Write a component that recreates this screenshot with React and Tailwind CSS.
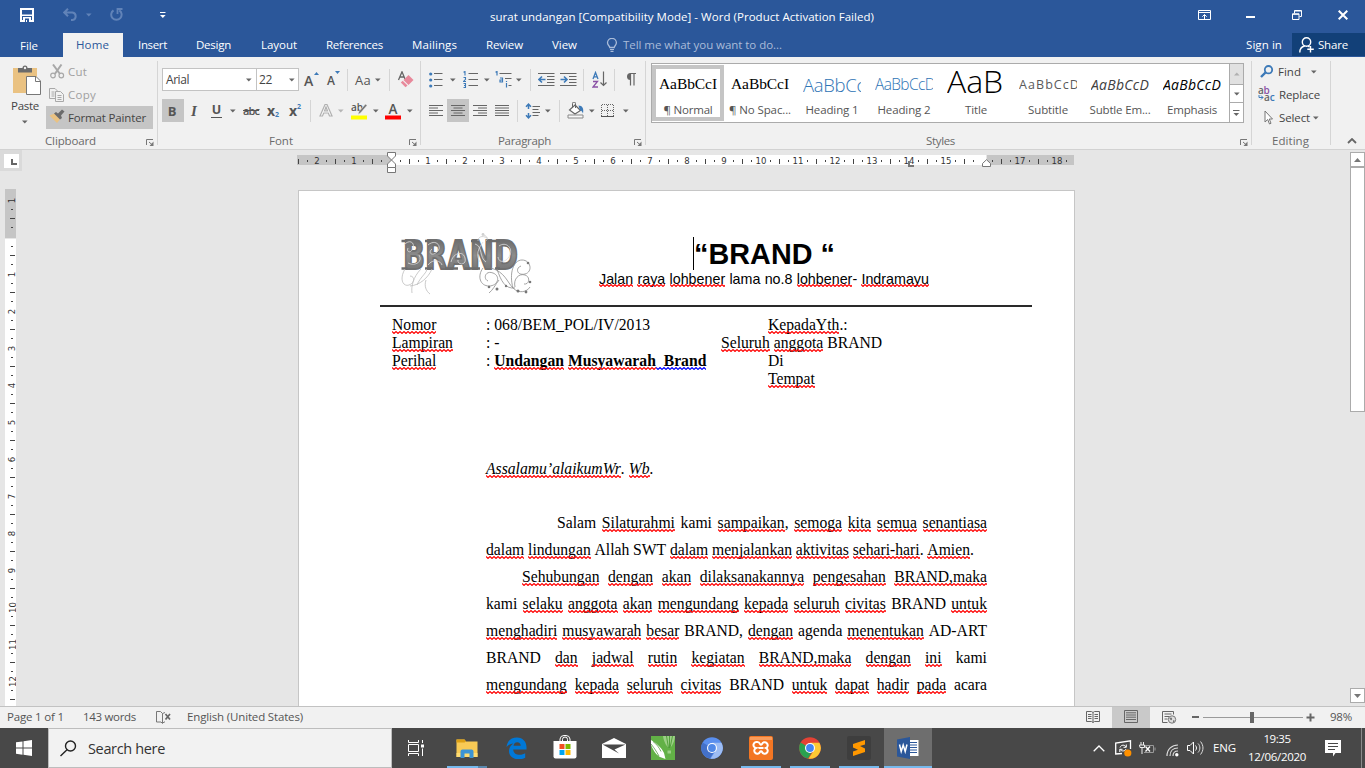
import React, { useLayoutEffect, useRef } from "react";

/* Text set to a fixed measure: the tracking is computed from the natural width. */
function Fit({ w, className = "", children }) {
  const ref = useRef(null);
  useLayoutEffect(() => {
    const el = ref.current;
    el.style.letterSpacing = "0px";
    const natural = el.getBoundingClientRect().width;
    const n = el.textContent.length;
    el.style.letterSpacing = (w - natural) / n + "px";
  }, [w, children]);
  return (
    <span ref={ref} className={"inline-block shrink-0 whitespace-pre " + className}>
      {children}
    </span>
  );
}

function Ico({ w, h, className = "", children }) {
  return (
    <svg width={w} height={h} viewBox={`0 0 ${w} ${h}`} fill="none" className={"block shrink-0 " + className}>
      {children}
    </svg>
  );
}

const Arrow = ({ className = "", color = "#666" }) => (
  <Ico w={6} h={4} className={className}>
    <path d="M0 0.5h5.6L2.8 3.5z" fill={color} />
  </Ico>
);
const Sep = ({ className = "" }) => <div className={"h-[22px] w-px shrink-0 bg-[#d5d5d5] " + className} />;
const GroupSep = () => <div className="mt-1 h-[84px] w-px shrink-0 bg-[#d5d5d5]" />;
const Launcher = ({ className = "" }) => (
  <Ico w={8} h={7} className={className}>
    <path d="M0.5 6V0.5H7" stroke="#777" />
    <path d="M3 3l3 2.6" stroke="#777" />
    <path d="M7.5 2.5V7H3.5z" fill="#777" />
  </Ico>
);

function TitleBar() {
  return (
    <div className="flex h-[33px] items-center text-white">
      <Ico w={14} h={14} className="ml-5 -mt-[3px]">
        <path d="M1 1h12v12H1z" stroke="#fff" strokeWidth="2" />
        <path d="M2 6.500h10v1.600H2zM3 9h8v5H3z" fill="#fff" />
        <path d="M5 10.500h4V14H7v-2H6v2H5z" fill="#2b579a" />
      </Ico>
      <Ico w={14} h={13} className="ml-[29px] -mt-1">
        <path d="M1 4.500h8.500a3.800 3.800 0 0 1 0 7.500H8M5 0.700L1.200 4.500L5 8.300" stroke="#6183b8" strokeWidth="2" />
      </Ico>
      <Arrow className="ml-[9px] -mt-1" color="#6183b8" />
      <Ico w={13} h={13} className="ml-[18px] -mt-1">
        <path d="M3.500 2.300a5.200 5.200 0 1 0 5.800 0" stroke="#6183b8" strokeWidth="2" />
        <path d="M7.500 6V1h5" stroke="#6183b8" strokeWidth="1.800" />
      </Ico>
      <Ico w={6} h={7} className="ml-[37px] -mt-[3px]">
        <path d="M0 0.500h5.500" stroke="#fff" />
        <path d="M0 3h5.600L2.800 6z" fill="#fff" />
      </Ico>
      <Fit w={384} className="ml-[324px] text-[11.5px]">surat undangan [Compatibility Mode] - Word (Product Activation Failed)</Fit>
      <Ico w={13} h={10} className="ml-[324px] -mt-[3px]">
        <path d="M0.500 0.500h12v9h-12zM0.500 2.500h12M6.500 9V4.500M4.300 6.700L6.500 4.500l2.200 2.200" stroke="#fff" />
      </Ico>
      <div className="ml-[35px] h-0.5 w-[9px] bg-white" />
      <Ico w={10} h={10} className="ml-[37px] -mt-[3px]">
        <path d="M0.500 3.800h6.500v5.700H0.500zM0.500 4.300H7" stroke="#fff" />
        <path d="M2.500 3.500v-3h7v6H7.500M2.500 1h7" stroke="#fff" />
      </Ico>
      <Ico w={10} h={10} className="ml-9 -mt-[3px]">
        <path d="M0.700 0.700l8.600 8.600M9.300 0.700L0.700 9.300" stroke="#fff" strokeWidth="2" />
      </Ico>
    </div>
  );
}

function Tabs() {
  return (
    <div className="flex h-6 items-center text-[11.5px] text-white">
      <Fit w={18} className="ml-5 mt-px">File</Fit>
      <div className="ml-[25px] flex h-6 w-[60px] items-center bg-[#f1f1f1] pl-[13px] text-[#2b579a]">
        <Fit w={33}>Home</Fit>
      </div>
      <Fit w={29} className="ml-[15px]">Insert</Fit>
      <Fit w={35} className="ml-[29px]">Design</Fit>
      <Fit w={36} className="ml-[30px]">Layout</Fit>
      <Fit w={57} className="ml-[29px]">References</Fit>
      <Fit w={45} className="ml-[29px]">Mailings</Fit>
      <Fit w={37} className="ml-[29px]">Review</Fit>
      <Fit w={25} className="ml-[29px]">View</Fit>
      <Ico w={12} h={14} className="ml-[29px]">
        <path d="M3.800 9.500C3.800 8 1.500 7.200 1.500 4.800a4.400 4.400 0 0 1 8.900 0C10.400 7.200 8.200 8 8.200 9.500z" stroke="#aabcd9" strokeWidth="1.300" />
        <path d="M4 11.500h4M4.500 13.300h3" stroke="#aabcd9" strokeWidth="1.200" />
      </Ico>
      <Fit w={159} className="ml-[5px] text-[#aabcd9]">Tell me what you want to do...</Fit>
      <Fit w={36} className="ml-[464px]">Sign in</Fit>
      <div className="mb-px ml-[10px] flex h-[23px] w-[73px] items-center bg-[#124078] pl-[7px]">
        <Ico w={15} h={16}>
          <circle cx="7.500" cy="5" r="4.200" stroke="#fff" strokeWidth="1.400" />
          <path d="M0.800 15.500c0-4 2.500-6 5-6.500M9 9.200l1.500.8M11.500 9v6.500M8.300 12.300h6.500" stroke="#fff" strokeWidth="1.400" />
        </Ico>
        <Fit w={30} className="ml-1">Share</Fit>
      </div>
    </div>
  );
}

function Clipboard() {
  return (
    <div className="flex w-[157px] flex-col">
      <div className="flex h-[76px]">
        <div className="flex w-[46px] flex-col items-start pt-2">
          <Ico w={30} h={31} className="ml-[13px]">
            <path d="M0 3h24v25H0z" fill="#eac282" />
            <path d="M5 3h4.500a2.500 2.500 0 0 1 5 0H19v4.500H5z" fill="#6b6b6b" />
            <circle cx="12" cy="3" r="1.200" fill="#f1f1f1" />
            <path d="M13.500 11.500h9.500l4.500 4.500v13.500h-14z" fill="#fff" stroke="#777" />
            <path d="M22.500 11.500v5h5" stroke="#777" />
          </Ico>
          <Fit w={28} className="ml-[11px] mt-0.5 h-4 text-[11.5px] leading-4 text-[#444]">Paste</Fit>
          <Arrow className="ml-[22px] mt-[6px]" />
        </div>
        <div className="flex w-[107px] flex-col pt-[3px] text-[11.5px]">
          <div className="flex h-[23px] items-center text-[#a0a0a0]">
            <Ico w={15} h={15} className="ml-[4px]">
              <path d="M3 0.500l7 9.500M11.500 0.500L4.800 10" stroke="#a8a8a8" strokeWidth="2" />
              <circle cx="3" cy="11.500" r="2.300" stroke="#a8a8a8" strokeWidth="1.200" />
              <circle cx="11.300" cy="11.500" r="2.300" stroke="#a8a8a8" strokeWidth="1.200" />
            </Ico>
            <Fit w={19} className="ml-[3px]">Cut</Fit>
          </div>
          <div className="flex h-[23px] items-center text-[#a0a0a0]">
            <Ico w={16} h={14} className="ml-[3px]">
              <path d="M6 10.500H0.500v-10H6l2.500 2.500M2.500 4h3M2.500 6h3M2.500 8h3" stroke="#a8a8a8" />
              <path d="M6.500 3.500h5l3 3v7h-8zM8.500 7.500h4M8.500 9.500h4M8.500 11.500h4" stroke="#a8a8a8" />
            </Ico>
            <Fit w={28} className="ml-[3px]">Copy</Fit>
          </div>
          <div className="flex h-[23px] items-center bg-[#c5c5c5] text-[#444]">
            <Ico w={16} h={15} className="ml-[3px] -mt-0.5">
              <path d="M0.500 6.500l5-2 5.500 6L8 14z" fill="#eac282" />
              <path d="M5 4.500L7 3l2 1.500L13 0.500l2.500 2L12 6.500l1 2.500-2 1.500z" fill="#6b6b6b" />
            </Ico>
            <Fit w={78} className="ml-[3px]">Format Painter</Fit>
          </div>
        </div>
      </div>
      <div className="flex h-4 items-center text-[11.5px] text-[#6a6a6a]">
        <Fit w={51} className="ml-[45px]">Clipboard</Fit>
        <Launcher className="ml-[50px] mt-0.5" />
      </div>
    </div>
  );
}

function FontGroup() {
  return (
    <div className="flex w-[262px] flex-col pt-[11px] text-[#444]">
      <div className="flex h-[23px] items-center">
        <div className="ml-1 flex h-[23px] w-[95px] shrink-0 items-center border border-[#c3c3c3] bg-white">
          <Fit w={23} className="ml-[3px] text-[12px]">Arial</Fit>
          <Arrow className="ml-[57px]" />
        </div>
        <div className="-ml-px flex h-[23px] w-[43px] shrink-0 items-center border border-[#c3c3c3] bg-white">
          <Fit w={13} className="ml-[2px] text-[12px]">22</Fit>
          <Arrow className="ml-[17px]" />
        </div>
        <div className="ml-[5px] flex w-4 items-start">
          <span className="w-[10px] pt-[2px] text-[14px] font-semibold leading-4 text-[#555]">A</span>
          <Ico w={5} h={3} className="mt-[1px]"><path d="M0 3h5L2.500 0z" fill="#3d7ab8" /></Ico>
        </div>
        <div className="ml-[7px] flex w-[14px] items-start">
          <span className="w-[8px] pt-[3px] text-[12px] font-semibold leading-4 text-[#555]">A</span>
          <Ico w={5} h={3} className="mt-[1px]"><path d="M0 0h5L2.500 3z" fill="#3d7ab8" /></Ico>
        </div>
        <Sep className="ml-[6px]" />
        <Fit w={16} className="ml-[7px] text-[13px] font-medium leading-5 text-[#555]">Aa</Fit>
        <Arrow className="ml-1" />
        <Sep className="ml-2" />
        <Ico w={17} h={17} className="ml-[7px]">
          <path d="M1.500 9L5 0.800L8 8M2.800 6h4" stroke="#666" strokeWidth="1.300" />
          <path d="M11.500 4l5 5-5 5L6.500 9z" fill="#e8899b" />
          <path d="M5.700 9.800l4.800 4.800-2 1.600L3.800 11.500z" fill="#e8899b" />
        </Ico>
      </div>
      <div className="mt-2 flex h-[23px] items-center text-[#555]">
        <div className="ml-1 flex h-[23px] w-[22px] shrink-0 items-center justify-center bg-[#c5c5c5] pr-0.5 text-[13px] font-bold">B</div>
        <span className="ml-[5px] w-[10px] shrink-0 text-center font-['Liberation_Serif'] text-[15px] font-bold italic">I</span>
        <span className="ml-3 flex h-[15px] w-[11px] shrink-0 items-center justify-center border-b border-[#555] text-[12.5px] font-bold">U</span>
        <Arrow className="ml-2" />
        <Fit w={16} className="ml-[7px] text-[11px] font-semibold line-through">abc</Fit>
        <div className="ml-2 flex w-[13px] shrink-0 items-end">
          <span className="text-[14px] font-bold leading-4 text-[#555]">x</span>
          <span className="text-[7px] font-bold leading-[8px] text-[#3d7ab8]">2</span>
        </div>
        <div className="ml-[9px] flex w-[13px] shrink-0 items-start">
          <span className="text-[14px] font-bold leading-4 text-[#555]">x</span>
          <span className="text-[7px] font-bold leading-[8px] text-[#3d7ab8]">2</span>
        </div>
        <Sep className="ml-2" />
        <Ico w={14} h={15} className="ml-2">
          <path d="M1 13L6 1.500h2L13 13h-2.500l-1.200-3H4.700l-1.200 3zM5.500 8h3L7 4z" stroke="#b0b0b0" strokeWidth="1.200" fill="#fafafa" />
        </Ico>
        <Arrow className="ml-[5px]" color="#b5b5b5" />
        <Ico w={18} h={18} className="ml-[6px]">
          <text x="1" y="8.500" fontSize="10" fontWeight="600" fill="#555" fontFamily="Open Sans">ab</text>
          <path d="M15.500 2L17 3.500L10.500 11L8 12.500L9 9.500z" fill="#777" stroke="#f1f1f1" strokeWidth="0.500" />
          <path d="M1 13.500h16V17.500H1z" fill="#ff0" />
        </Ico>
        <Arrow className="ml-[5px]" />
        <Ico w={16} h={18} className="ml-[6px]">
          <text x="3.500" y="12" fontSize="13.500" fontWeight="600" fill="#555" fontFamily="Open Sans">A</text>
          <path d="M0 13.500h16V17.500H0z" fill="#f00" />
        </Ico>
        <Arrow className="ml-[6px]" />
      </div>
      <div className="mt-[11px] flex h-4 items-center text-[11.5px] text-[#6a6a6a]">
        <Fit w={24} className="ml-[111px]">Font</Fit>
        <Launcher className="ml-[116px] mt-0.5" />
      </div>
    </div>
  );
}

const AlignIcon = ({ rows, className = "" }) => (
  <Ico w={14} h={11} className={className}>
    {rows.map(([a, b], i) => (
      <path key={i} d={`M${a} ${[0.5, 3, 5.5, 8, 10.5][i]}H${b}`} stroke="#666" />
    ))}
  </Ico>
);

function ParagraphGroup() {
  return (
    <div className="flex w-[224px] flex-col pt-[11px]">
      <div className="flex h-[23px] items-center">
        <Ico w={14} h={16} className="ml-2">
          <circle cx="1.700" cy="2" r="1.600" fill="#3d7ab8" />
          <circle cx="1.700" cy="8" r="1.600" fill="#3d7ab8" />
          <circle cx="1.700" cy="14" r="1.600" fill="#3d7ab8" />
          <path d="M5 1.500h8.500M5 7.500h8.500M5 13.500h8.500" stroke="#666" />
        </Ico>
        <Arrow className="ml-[7px]" />
        <Ico w={15} h={17} className="ml-[7px]">
          <path d="M0.500 1.200L2 0.500v4M0.500 6.500h2v1.800L0.500 10.500h2.500M0.500 12.500h2v4h-2M1 14.500h1.500" stroke="#3d7ab8" strokeWidth="1.100" />
          <path d="M5.500 2.500H15M5.500 8.500H15M5.500 14.500H15" stroke="#666" />
        </Ico>
        <Arrow className="ml-[6px]" />
        <Ico w={18} h={17} className="ml-[5px]">
          <path d="M0.500 1.200L2 0.500v4M5 7h2.500v4H5V9h2.500M11.500 12v4.500M11.500 10v1" stroke="#3d7ab8" strokeWidth="1.200" />
          <path d="M4.500 2.500h12M10 7.500h6.500M13.500 14.500h3" stroke="#666" />
        </Ico>
        <Arrow className="ml-[3px]" />
        <Sep className="ml-2" />
        <Ico w={17} h={14} className="ml-[7px]">
          <path d="M0 0.500h16.500M9 3.500h7.500M9 6.500h7.500M9 9.500h7.500M0 12.500h16.500" stroke="#666" />
          <path d="M1.500 6.500H7.500M4 3.500L1 6.500L4 9.500" stroke="#3d7ab8" strokeWidth="1.600" />
        </Ico>
        <Ico w={17} h={14} className="ml-[5px]">
          <path d="M0 0.500h16.500M9 3.500h7.500M9 6.500h7.500M9 9.500h7.500M0 12.500h16.500" stroke="#666" />
          <path d="M0.500 6.500H6.500M4 3.500L7 6.500L4 9.500" stroke="#3d7ab8" strokeWidth="1.600" />
        </Ico>
        <Sep className="ml-[6px]" />
        <Ico w={15} h={17} className="ml-2">
          <path d="M1 8L3.500 1.500L6 8M1.700 5.800h3.600" stroke="#3d7ab8" strokeWidth="1.300" />
          <path d="M1 10.500h4.500L1 16h5" stroke="#8a51a5" strokeWidth="1.300" />
          <path d="M11.500 0.500V14.500M8.500 11.500l3 3 3-3" stroke="#666" strokeWidth="1.200" />
        </Ico>
        <Sep className="ml-[7px]" />
        <Ico w={11} h={13} className="ml-[10px]">
          <path d="M5.500 0.500H11M5.500 0v12.500M9 0v12.500" stroke="#666" strokeWidth="1.200" />
          <path d="M5.500 0a3.500 3.500 0 0 0 0 7z" fill="#666" />
        </Ico>
      </div>
      <div className="mt-2 flex h-[23px] items-center">
        <AlignIcon className="ml-2" rows={[[0, 14], [0, 9], [0, 14], [0, 9], [0, 14]]} />
        <div className="ml-1 flex h-[23px] w-[22px] shrink-0 items-center justify-center bg-[#c5c5c5]">
          <AlignIcon rows={[[0, 14], [2.5, 11.5], [0, 14], [2.5, 11.5], [0, 14]]} />
        </div>
        <AlignIcon className="ml-1" rows={[[0, 14], [5, 14], [0, 14], [5, 14], [0, 14]]} />
        <AlignIcon className="ml-2" rows={[[0, 14], [0, 14], [0, 14], [0, 14], [0, 14]]} />
        <Sep className="ml-2" />
        <Ico w={16} h={16} className="ml-[7px]">
          <path d="M3.500 1v5M3.500 10v5M1 3.800L3.500 1.200L6 3.800M1 12.200L3.500 14.800L6 12.200" stroke="#3d7ab8" strokeWidth="1.500" />
          <path d="M7.500 3.500H15M7.500 6.500H13.500M7.500 9.500H15M7.500 12.500H13.500" stroke="#666" />
        </Ico>
        <Arrow className="ml-1" />
        <Sep className="ml-2" />
        <Ico w={17} h={17} className="ml-[7px]">
          <path d="M8 3L13.500 8.500L8 12L2.500 8z" fill="#fff" stroke="#666" strokeWidth="1.200" />
          <path d="M5.500 6V1.500a1.500 1.500 0 0 1 3 0V6" stroke="#666" />
          <path d="M11.500 3.500c4 0 5.500 3 4.500 8c-1-2.500-2-3-3-3z" fill="#3d7ab8" />
          <path d="M1 13h15v3H1z" fill="#f8f8f8" stroke="#888" />
        </Ico>
        <Arrow className="ml-[5px]" />
        <Ico w={14} h={14} className="ml-[6px]">
          <path d="M1 0.500h12M0.500 1v12M12.500 1v12M6.500 1v12M1 6.500h12" stroke="#666" strokeDasharray="1 1" />
          <path d="M0 12.500h13" stroke="#555" />
        </Ico>
        <Arrow className="ml-2" />
      </div>
      <div className="mt-[11px] flex h-4 items-center text-[11.5px] text-[#6a6a6a]">
        <Fit w={53} className="ml-[77px]">Paragraph</Fit>
        <Launcher className="ml-[83px] mt-0.5" />
      </div>
    </div>
  );
}

function StyleCell({ label, lw, selected, children }) {
  return (
    <div className={"flex h-[56px] w-[72px] shrink-0 flex-col items-center " + (selected ? "border-4 border-[#c5c5c5]" : "pt-1")}>
      <div className="flex h-[29px] w-[58px] shrink-0 items-center overflow-hidden">{children}</div>
      <div className="mt-1 flex h-4 items-center text-[11.5px] text-[#555]">
        <Fit w={lw}>{label}</Fit>
      </div>
    </div>
  );
}

function StylesGroup() {
  return (
    <div className="flex w-[605px] flex-col pt-1.5">
      <div className="ml-[5px] flex h-[60px] w-[593px] border border-[#ababab] bg-white">
        <div className="flex w-[577px] overflow-hidden pt-px">
          <StyleCell label="¶ Normal" lw={49} selected>
            <Fit w={58} className="mt-px font-['Liberation_Serif'] text-[15.5px] text-black">AaBbCcI</Fit>
          </StyleCell>
          <StyleCell label="¶ No Spac..." lw={62}>
            <Fit w={58} className="mt-px font-['Liberation_Serif'] text-[15.5px] text-black">AaBbCcI</Fit>
          </StyleCell>
          <StyleCell label="Heading 1" lw={53}>
            <Fit w={62} className="mt-[3px] text-[18.5px] font-light text-[#2e74b5]">AaBbCc</Fit>
          </StyleCell>
          <StyleCell label="Heading 2" lw={53}>
            <Fit w={60} className="mt-px text-[15.5px] font-light text-[#2e74b5]">AaBbCcD</Fit>
          </StyleCell>
          <StyleCell label="Title" lw={22}>
            <Fit w={56} className="-mt-[6px] text-[32px] font-light leading-[29px] text-black">AaB</Fit>
          </StyleCell>
          <StyleCell label="Subtitle" lw={40}>
            <Fit w={61} className="mt-[3px] text-[12.5px] text-[#5a5a5a]">AaBbCcD</Fit>
          </StyleCell>
          <StyleCell label="Subtle Em..." lw={61}>
            <Fit w={58} className="mt-[3px] text-[14px] italic text-[#404040]">AaBbCcD</Fit>
          </StyleCell>
          <StyleCell label="Emphasis" lw={50}>
            <Fit w={58} className="mt-[3px] text-[14px] italic text-black">AaBbCcD</Fit>
          </StyleCell>
        </div>
        <div className="flex w-[14px] flex-col border-l border-[#ababab]">
          <div className="flex h-5 items-center justify-center bg-[#e1e1e1]">
            <Ico w={6} h={4}><path d="M0 3.500h5.600L2.800 0.500z" fill="#b0b0b0" /></Ico>
          </div>
          <div className="flex h-[19px] items-center justify-center border-y border-[#ababab]"><Arrow /></div>
          <div className="flex h-[19px] items-center justify-center">
            <Ico w={7} h={6}>
              <path d="M0 0.500h6.500" stroke="#666" />
              <path d="M0.500 3h5.600L3.300 6z" fill="#666" />
            </Ico>
          </div>
        </div>
      </div>
      <div className="mt-[10px] flex h-4 items-center text-[11.5px] text-[#6a6a6a]">
        <Fit w={29} className="ml-[280px]">Styles</Fit>
        <Launcher className="ml-[285px] mt-0.5" />
      </div>
    </div>
  );
}

function EditingGroup() {
  return (
    <div className="flex w-[78px] flex-col pt-[3px] text-[11.5px] text-[#444]">
      <div className="flex h-[23px] items-center">
        <Ico w={14} h={13} className="ml-2">
          <circle cx="8.500" cy="4.700" r="3.700" stroke="#3d7ab8" strokeWidth="1.800" />
          <path d="M5.500 7.500L1 12" stroke="#3d7ab8" strokeWidth="2.400" />
        </Ico>
        <Fit w={23} className="ml-1">Find</Fit>
        <Arrow className="ml-[10px]" />
      </div>
      <div className="flex h-[23px] items-center">
        <div className="-mt-0.5 ml-1.5 flex w-[18px] flex-col text-[10px] font-semibold leading-[7px] text-[#666]">
          <span className="tracking-[-0.3px]">a<span className="text-[#8a51a5]">b</span></span>
          <span className="flex items-center">
            <Ico w={6} h={5}><path d="M1 0v2.500h4M3 0.500L5 2.500L3 4.500" stroke="#3d7ab8" /></Ico>
            a<span className="text-[#3d7ab8]">c</span>
          </span>
        </div>
        <Fit w={41} className="ml-[3px]">Replace</Fit>
      </div>
      <div className="flex h-[23px] items-center">
        <Ico w={9} h={15} className="ml-3">
          <path d="M1 1v11l2.700-2.500L5.500 14l1.500-.7L5.300 9H8.500z" fill="#fff" stroke="#777" />
        </Ico>
        <Fit w={31} className="ml-[6px]">Select</Fit>
        <Arrow className="ml-[3px]" />
      </div>
      <div className="mt-[4px] flex h-4 items-center text-[#6a6a6a]">
        <Fit w={37} className="ml-5">Editing</Fit>
      </div>
    </div>
  );
}

function Ribbon() {
  return (
    <div className="flex h-[93px] border-b border-[#d2d2d2] bg-[#f1f1f1]">
      <Clipboard />
      <GroupSep />
      <FontGroup />
      <GroupSep />
      <ParagraphGroup />
      <GroupSep />
      <StylesGroup />
      <GroupSep />
      <EditingGroup />
      <GroupSep />
      <Ico w={10} h={6} className="ml-4 mt-[81px]">
        <path d="M1 5l4-4 4 4" stroke="#666" strokeWidth="1.800" />
      </Ico>
    </div>
  );
}

/* Ruler marks, one per quarter of a centimetre. */
const quarters = (from, to) => Array.from({ length: to - from + 1 }, (_, i) => from + i);

function HRuler() {
  return (
    <div className="relative mt-[5px] flex h-[10px] w-[777px]">
      <div className="w-[94px] bg-[#c5c5c5]" />
      <div className="w-[595px] bg-white" />
      <div className="ml-px flex-1 bg-[#c5c5c5]" />
      <div className="absolute inset-x-0 top-0 flex h-[12px] overflow-hidden pl-[1.4px] pt-px">
        {quarters(-10, 73).map((q, i) => (
          <div key={q} className={"flex h-[10px] w-[9.25px] shrink-0 items-center justify-center " + (i === 0 ? "-ml-[4.6px]" : "")}>
            {q % 4 === 0 ? (
              q === 0 || q === 64 ? null : (
                <span className="font-['DejaVu_Sans_Condensed','DejaVu_Sans',sans-serif] text-[9.5px] leading-[10px] text-[#333]">{Math.abs(q / 4)}</span>
              )
            ) : q % 2 === 0 ? (
              <span className="h-[5px] w-px bg-[#444]" />
            ) : (
              <span className="h-0.5 w-px bg-[#444]" />
            )}
          </div>
        ))}
      </div>
      <Ico w={10} h={22} className="absolute -top-[3px] left-[90px]">
        <path d="M0.500 0.500h8v3.500l-4 4 4 4v3.500h-8V12l4-4-4-4z" fill="#fff" stroke="#777" />
        <path d="M0.500 15.500h8v5h-8z" fill="#fff" stroke="#777" />
      </Ico>
      <Ico w={6} h={6} className="absolute left-[611px] top-[6px]">
        <path d="M1 0v5H6" stroke="#777" strokeWidth="2" />
      </Ico>
      <Ico w={10} h={8} className="absolute left-[685px] top-[4px]">
        <path d="M0.500 7.500V4.500L4.500 0.700L8.500 4.500v3z" fill="#fff" stroke="#777" />
      </Ico>
    </div>
  );
}

function VRuler() {
  return (
    <div className="relative ml-[5px] mt-[17px] flex w-[11px] shrink-0 flex-col">
      <div className="h-[49px] bg-[#c5c5c5]" />
      <div className="mt-px flex-1 bg-white" />
      <div className="absolute inset-0 overflow-hidden pt-[6.5px]">
        {quarters(-4, 50).map((q) => (
          <div key={q} className="flex h-[9.25px] w-[11px] items-center justify-center pl-[3px]">
            {q % 4 === 0 ? (
              q === 0 ? null : (
                <span className="-rotate-90 font-['DejaVu_Sans_Condensed','DejaVu_Sans',sans-serif] text-[9.5px] leading-[9px] text-[#333]">{Math.abs(q / 4)}</span>
              )
            ) : q % 2 === 0 ? (
              <span className="h-px w-[5px] bg-[#444]" />
            ) : (
              <span className="h-px w-0.5 bg-[#444]" />
            )}
          </div>
        ))}
      </div>
    </div>
  );
}

const zigzag = "M0 0.500" + "l2 2l2 -2".repeat(60);

/* A word with the proofing mark below its baseline. */
function W({ children, color = "#ff0000", at = "bottom-0" }) {
  return (
    <span className="relative inline-block whitespace-pre">
      {children}
      <svg className={"absolute left-0 h-[3px] w-full overflow-hidden " + at} aria-hidden="true">
        <path d={zigzag} fill="none" stroke={color} strokeWidth="1.1" />
      </svg>
    </span>
  );
}

/* Words that begin with "~" are flagged by the spell checker. Anything after "|" stays outside the mark. */
function Line({ text, className = "" }) {
  return (
    <div className={"flex h-[27px] w-[501px] justify-between " + className}>
      {text.split(" ").map((t, i) => {
        if (t[0] !== "~") return <span key={i}>{t}</span>;
        const [word, rest] = t.slice(1).split("|");
        return (
          <span key={i}>
            <W>{word}</W>
            {rest}
          </span>
        );
      })}
    </div>
  );
}

function Logo() {
  return (
    <svg width="132" height="64" viewBox="0 0 132 64" fill="none" className="ml-[102px] mt-[41px] block shrink-0">
      <defs>
        <linearGradient id="metal" x1="0" y1="0" x2="0" y2="1">
          <stop offset="0" stopColor="#606060" />
          <stop offset="0.5" stopColor="#8c8c8c" />
          <stop offset="1" stopColor="#6a6a6a" />
        </linearGradient>
      </defs>
      <text x="2" y="37" fontSize="39" fontWeight="700" fontFamily="DejaVu Sans" textLength="115" lengthAdjust="spacingAndGlyphs" fill="url(#metal)" stroke="#707070" strokeWidth="1.800">BRAND</text>
      <path d="M0.500 9h6M0.500 36.500h6M24 9h6M24 36.500h8M44 36.500h6M48 36.500h9M64 36.500h9M70 9h8M71 36.500h8M88 9h7M94 9h5M94 36.500h5" stroke="#6c6c6c" strokeWidth="2.500" />
      <g stroke="#dedede" strokeWidth="0.800">
        <path d="M3 13c5-6 11-3 9 3s-7 4-5 0M7 31c8 4 15-2 11-8M27 13c8-7 15 2 9 7s-9 0-5-3M27 33c5-7 13-4 14 0M50 30c2-9 12-12 14-4s-8 7-7 2M74 12c8 2 4 14 11 18M82 10c-4 6-8 12-3 20M98 14c7-5 14 2 11 9s-11 9-12 2" />
      </g>
      <g stroke="#8d8d8d" strokeWidth="0.800">
        <path d="M4 37c-6 10-2 18 4 16s6-9 1-9M9 54c10-1 18-8 22-17M16 53c3-8 12-14 9-16M20 37c-8 8-10 18-9 24M25 48c-2 6 0 11 4 14" stroke="#bdbdbd" />
        <path d="M82 36c-6 8-3 18 6 18s12-10 4-13-10 6-5 8M90 36c14 4 16 14 22 20s14 4 17-1M96 37c4 12 8 20 18 19M112 56c-4-14 0-28 9-28s11 12 3 14-10-6-4-8M114 55c-2-8 4-14 10-12s4 10-1 9M98 48c-4 5-6 10-10 13" />
        <path d="M86 6c-5-3-9-1-9 3M83 3c4 2 4 4 2 6" stroke="#c8c8c8" />
      </g>
      <g fill="#777">
        <circle cx="82" cy="2.500" r="1.400" fill="#d0d0d0" />
        <circle cx="96" cy="57" r="1.500" />
        <circle cx="105" cy="54" r="1.200" />
        <circle cx="117" cy="59" r="1.500" />
        <circle cx="125" cy="60" r="1.400" />
        <circle cx="129" cy="50" r="1.300" />
        <circle cx="88" cy="55" r="1.300" />
        <circle cx="127" cy="31" r="1.300" />
      </g>
    </svg>
  );
}

function Page() {
  return (
    <div className="ml-[282px] mt-[18px] flex w-[777px] shrink-0 flex-col border border-b-0 border-[#c6c6c6] bg-white font-['Liberation_Serif',serif] text-[15.68px] leading-[18px] text-black">
      <div className="flex h-[114px]">
        <Logo />
        <div className="ml-[66px] mt-[46px] flex w-[330px] flex-col items-center font-['Liberation_Sans',sans-serif]">
          <div className="flex h-[34px] items-center">
            <div className="-mt-px h-[33px] w-px bg-black" />
            <Fit w={141} className="text-[28.75px] font-bold leading-[34px]">“BRAND “</Fit>
          </div>
          <div className="flex w-[330px] justify-between text-[14.3px] leading-[17px]">
            <W at="bottom-px">Jalan</W>
            <W at="bottom-px">raya</W>
            <W at="bottom-px">lohbener</W>
            <span>lama</span>
            <span>no.8</span>
            <span><W at="bottom-px">lohbener</W>-</span>
            <W at="bottom-px">Indramayu</W>
          </div>
        </div>
      </div>
      <div className="ml-[81px] h-0.5 w-[652px] bg-[#2a2a2a]" />
      <div className="ml-[93px] mt-[9px] flex h-[72px]">
        <div className="w-[94px]">
          <div><W>Nomor</W></div>
          <div><W>Lampiran</W></div>
          <div><W>Perihal</W></div>
        </div>
        <div className="w-[235px] whitespace-pre">
          <div>: 068/BEM_POL/IV/2013</div>
          <div>: -</div>
          <div>: <b><W>Undangan</W> <W>Musyawarah</W><W color="#0000ff">{"  Brand"}</W></b></div>
        </div>
        <div className="whitespace-pre">
          <div className="pl-[47px]"><W>KepadaYth</W>.:</div>
          <div><W>Seluruh</W> <W>anggota</W> BRAND</div>
          <div className="pl-[47px]">Di</div>
          <div className="pl-[47px]"><W>Tempat</W></div>
        </div>
      </div>
      <div className="ml-[187px] mt-[72px] h-[18px] italic"><W>Assalamu’alaikumWr</W>. <W>Wb</W>.</div>
      <div className="ml-[187px] mt-9">
        <Line className="pl-[71px]" text="Salam ~Silaturahmi kami ~sampaikan|, ~semoga ~kita ~semua ~senantiasa" />
        <Line className="pr-[13px]" text="~dalam ~lindungan Allah SWT ~dalam ~menjalankan ~aktivitas ~sehari-hari|. ~Amien|." />
        <Line className="pl-[36px]" text="~Sehubungan ~dengan ~akan ~dilaksanakannya ~pengesahan ~BRAND,maka" />
        <Line text="kami ~selaku ~anggota ~akan ~mengundang ~kepada ~seluruh ~civitas BRAND ~untuk" />
        <Line text="~menghadiri ~musyawarah ~besar BRAND, ~dengan agenda ~menentukan AD-ART" />
        <Line text="BRAND ~dan ~jadwal ~rutin ~kegiatan ~BRAND,maka ~dengan ~ini kami" />
        <Line text="~mengundang ~kepada ~seluruh ~civitas BRAND ~untuk ~dapat ~hadir ~pada acara" />
      </div>
    </div>
  );
}

function Workspace() {
  return (
    <div className="flex h-[556px] overflow-hidden bg-[#e6e6e6]">
      <div className="flex w-[1350px] flex-col">
        <div className="flex h-[22px] shrink-0">
          <div className="h-[21px] w-[22px] bg-[#dadada] pl-1 pt-1">
            <div className="h-[14px] w-[15px] bg-white pl-[7px] pt-[5px]">
              <div className="h-[6px] w-[6px] border-b-2 border-l-2 border-[#666]" />
            </div>
          </div>
          <div className="ml-[275px]"><HRuler /></div>
        </div>
        <div className="flex h-[534px] overflow-hidden">
          <VRuler />
          <Page />
        </div>
      </div>
      <div className="flex w-[15px] flex-col pt-0.5">
        <div className="flex h-[15px] w-[15px] items-center justify-center border border-[#ababab] bg-white">
          <Ico w={7} h={4}><path d="M0 4h7L3.500 0z" fill="#777" /></Ico>
        </div>
        <div className="h-[245px] w-[15px] border border-[#ababab] bg-white" />
        <div className="mt-[276px] flex h-[15px] w-[15px] items-center justify-center border border-[#ababab] bg-white">
          <Ico w={7} h={4}><path d="M0 0h7L3.500 4z" fill="#777" /></Ico>
        </div>
      </div>
    </div>
  );
}

function StatusBar() {
  return (
    <div className="flex h-[22px] items-center border-t border-[#c2c2c2] bg-[#f1f1f1] pb-px text-[11.5px] text-[#555]">
      <Fit w={57} className="ml-[7px]">Page 1 of 1</Fit>
      <Fit w={53} className="ml-[19px]">143 words</Fit>
      <Ico w={15} h={13} className="ml-5">
        <path d="M9 1.500L6.500 2.500L4.500 0.500H0.500v10.500h4.500l1.500 1.500 1.500-1.500h1M6.500 2.500v9.500" stroke="#777" />
        <path d="M9.500 3l4.500 5.500M14 3L9.500 8.500" stroke="#666" strokeWidth="1.700" />
      </Ico>
      <Fit w={116} className="ml-4">English (United States)</Fit>
      <Ico w={14} h={12} className="ml-[783px]">
        <path d="M0.500 0.500h5l1.500 1 1.500-1h5v10h-5l-1.500 1-1.500-1h-5zM7 1.500v10" stroke="#666" />
        <path d="M2 3.500h3.500M2 5.500h3.500M2 7.500h3.500M8.500 3.500H12M8.500 5.500H12M8.500 7.500H12" stroke="#666" />
      </Ico>
      <div className="-mb-px ml-3 flex h-[21px] w-[38px] items-center justify-center bg-[#c9c9c9]">
        <Ico w={14} h={13} className="-mt-0.5">
          <path d="M0.500 0.500h13v12H0.500zM2 2.800h10M2 5h10M2 7.200h10M2 9.500h10" stroke="#666" />
        </Ico>
      </div>
      <Ico w={15} h={13} className="ml-3">
        <path d="M5.500 11.500h-5v-11h11v3M2.500 3h7M2.500 5.500h5M2.500 8h3" stroke="#666" />
        <circle cx="10" cy="8.500" r="3.700" fill="#dedede" stroke="#777" />
        <path d="M7.500 7c2-1.500 3 0 2.500 1.500S8 9 7.500 7M11 9.500c2-1 2 1 0 2.500z" fill="#777" />
      </Ico>
      <div className="ml-[15px] h-0.5 w-[7px] bg-[#666]" />
      <div className="ml-[4px] flex h-[11px] w-[100px] items-center">
        <div className="h-px w-[47px] bg-[#9a9a9a]" />
        <div className="h-[11px] w-1 bg-[#666]" />
        <div className="h-px flex-1 bg-[#9a9a9a]" />
      </div>
      <Ico w={9} h={9} className="ml-[3px]">
        <path d="M4.500 0.500v8M0.500 4.500h8" stroke="#666" strokeWidth="2" />
      </Ico>
      <Fit w={22} className="ml-[15px]">98%</Fit>
    </div>
  );
}

const Chromium = ({ a, b, c, center }) => (
  <Ico w={22} h={22}>
    <circle cx="11" cy="11" r="10.800" fill={a} />
    <path d="M1.600 5.600A10.800 10.800 0 0 0 9 21.600L13.800 13.500L11 11z" fill={b} />
    <path d="M20.400 5.700H11L14.500 14L9.500 21.700A10.800 10.800 0 0 0 20.400 5.700z" fill={c} />
    <circle cx="11" cy="11" r="5" fill="#fff" />
    <circle cx="11" cy="11" r="3.900" fill={center} />
  </Ico>
);

function Task({ children, className = "", bar = "bg-transparent" }) {
  return (
    <div className={"flex h-10 shrink-0 flex-col items-center " + className}>
      <div className="flex h-[38px] items-center justify-center pt-0.5">{children}</div>
      <div className={"h-0.5 w-full " + bar} />
    </div>
  );
}

function Taskbar() {
  return (
    <div className="flex h-10 items-center bg-[#484848] text-white">
      <Ico w={16} h={16} className="ml-4">
        <path d="M0 2.300L6.500 1.400V7.500H0zM7.500 1.200L16 0v7.500H7.500zM0 8.500h6.500v6.200L0 13.800zM7.500 8.500H16V16l-8.500-1.200z" fill="#fff" />
      </Ico>
      <div className="ml-4 flex h-10 w-[344px] items-center border border-[#bdbdbd] bg-[#f2f2f2]">
        <Ico w={17} h={17} className="ml-[11px]">
          <circle cx="10.500" cy="6" r="5" stroke="#222" strokeWidth="1.400" />
          <path d="M7 9.700L0.500 16" stroke="#222" strokeWidth="1.400" />
        </Ico>
        <Fit w={77} className="ml-[11px] mt-[2px] text-[14.500px] text-[#333]">Search here</Fit>
      </div>
      <Ico w={17} h={16} className="ml-4">
        <path d="M0.500 0v2.500h10V0M0.500 4.500h10v7h-10zM0.500 16v-2.500h10V16M14.500 0v3M14.500 8.500V16" stroke="#fff" />
        <path d="M13 4.500h3v3h-3z" fill="#fff" />
      </Ico>
      <Task className="ml-[22px] w-10" bar="bg-[linear-gradient(90deg,#76b9ed_31px,#5a88ad_31px)]">
        <Ico w={22} h={19}>
          <path d="M0.500 0.500h8l1.500 2h11.500v15.500h-21z" fill="#f8ca55" />
          <path d="M0.500 0.500h8l1.500 2-1.500 1h-8z" fill="#dc9f14" />
          <path d="M0.500 14h21v4h-21z" fill="#ffdc72" />
          <path d="M4.500 19v-6.500a2 2 0 0 1 2-2h9a2 2 0 0 1 2 2V19h-4v-4.500h-5V19z" fill="#3c94d4" />
        </Ico>
      </Task>
      <Task className="ml-[9px] w-10">
        <Ico w={21} h={22}>
          <path d="M0.500 10C1.500 3 6 0.500 11 0.500c6 0 9.500 4.500 9.500 9.500v2.500H7.200c.3 4 3.500 5.300 6.300 5.300 2.400 0 4.500-.7 5.700-1.500v4.500c-1.700 1-4 1.500-6.500 1.500C6.500 22.300 3 18.500 3 14c0-3.200 1.700-6 4.300-7.600C4.500 6.700 2 8 0.500 10zM7.500 8.800h7.200c0-2-1.400-3.500-3.500-3.500S7.700 7 7.500 8.800z" fill="#0078d7" />
        </Ico>
      </Task>
      <Task className="ml-[9px] w-10">
        <Ico w={24} h={24} className="-mt-0.5">
          <path d="M7 6V4a4 4 0 0 1 4-3.500h2A4 4 0 0 1 17 4v2M9.500 6V4.500a2.500 2.500 0 0 1 5 0V6" stroke="#fff" />
          <path d="M0.500 6h23v15.500a2 2 0 0 1-2 2h-19a2 2 0 0 1-2-2z" fill="#fff" />
          <path d="M6.500 9h5v5h-5z" fill="#f25022" /><path d="M12.500 9h5v5h-5z" fill="#7fba00" />
          <path d="M6.500 15h5v5h-5z" fill="#00a4ef" /><path d="M12.500 15h5v5h-5z" fill="#ffb900" />
        </Ico>
      </Task>
      <Task className="ml-[9px] w-10">
        <Ico w={24} h={20}>
          <path d="M0 6L12 0l12 6v14H0z" fill="#fff" />
          <path d="M0.500 6.500h23L12.500 11.500L17 15.500z" fill="#484848" />
        </Ico>
      </Task>
      <Task className="ml-[9px] w-10">
        <Ico w={24} h={24}>
          <path d="M0 0h24v24H0z" fill="#62b146" />
          <path d="M0 4C5 7 11 12 13 17l1.500 6-5.500-2C4 18 2 13 0 9z" fill="#fff" />
          <path d="M0 8c4 5 5 7 8 12M2 5.500c4 3 6 6 8 10" stroke="#3c8c28" strokeWidth="0.700" />
          <path d="M12 0c1 7 4 10 5.500 12h1.500C21 10 23.500 6 24 0z" fill="#9ccf86" />
          <path d="M15.500 0l2 12M18.500 0v12M21.500 0l-2.500 12" stroke="#4b9c33" strokeWidth="0.900" />
          <path d="M16.500 14.500h3.500v3h-3.500z" fill="#9ccf86" />
        </Ico>
      </Task>
      <Task className="ml-[9px] w-10"><Chromium a="#5a8fee" b="#4371c9" c="#9dbdf4" center="#5089e8" /></Task>
      <Task className="ml-[9px] w-10" bar="bg-[#76b9ed]">
        <Ico w={24} h={24}>
          <rect width="24" height="24" rx="2" fill="#f37623" />
          <rect x="1" y="1" width="22" height="3" fill="#f99d5c" />
          <path d="M8 6a3 3 0 0 0-1 6 3 3 0 1 0 4 4c.3-1 1.700-1 2 0a3 3 0 1 0 4-4 3 3 0 1 0-4-4c-.3 1-1.700 1-2 0A3 3 0 0 0 8 6zM9.500 12h5" stroke="#fff" strokeWidth="2" />
        </Ico>
      </Task>
      <Task className="ml-[9px] w-10" bar="bg-[#76b9ed]"><Chromium a="#e44235" b="#2aa150" c="#fcc934" center="#4285f4" /></Task>
      <Task className="ml-[9px] w-10" bar="bg-[#76b9ed]">
        <Ico w={24} h={24}>
          <rect width="24" height="24" rx="2" fill="#3e3e3e" />
          <path d="M18 4v4.500L13 10l5 2.500V16L6 20v-4.500l5-1.700L6 11.500V8z" fill="#ff9800" />
        </Ico>
      </Task>
      <Task className="ml-[5px] w-12 bg-[#6e6e6e]" bar="bg-[#76b9ed]">
        <Ico w={22} h={22}>
          <path d="M11 3h10.500v16H11z" fill="#fff" />
          <path d="M13 5.500h7M13 8h7M13 10.500h7M13 13h7M13 15.500h7" stroke="#2b579a" />
          <path d="M0 2.500L13 0v22L0 19.500z" fill="#2b579a" />
          <path d="M2.500 7.500l1.700 7 2-6.500 2 6.500 1.800-7" stroke="#fff" strokeWidth="1.500" />
        </Ico>
      </Task>
      <Ico w={12} h={7} className="ml-[161px]">
        <path d="M0.700 6.300L6 1l5.300 5.300" stroke="#fff" strokeWidth="1.300" />
      </Ico>
      <Ico w={17} h={17} className="ml-[10px]">
        <path d="M7 13.500L0.700 14V3L15.500 0.800V9" stroke="#fff" strokeWidth="1.300" />
        <path d="M5 7.500c1-3 5-3 6 -.5M11.300 4.500v2.800H8.500M11 9c-1 2.500-4.500 2.500-6 .5M4.800 12V9.300h2.700" stroke="#fff" />
        <circle cx="12.800" cy="13" r="3.600" fill="#ff9100" />
      </Ico>
      <Ico w={17} h={13} className="ml-[7px]">
        <path d="M2 0v3M4.500 0v3M0.500 3h5v2.500H1zM3 6v6" stroke="#eee" />
        <path d="M6 3.500h8.500v7H5M16 5.500v3" stroke="#999" />
        <path d="M6.500 4.500l4.500 5M11 4.500l-4.500 5" stroke="#fff" strokeWidth="1.300" />
      </Ico>
      <Ico w={13} h={13} className="ml-[10px] mt-1">
        <path d="M1 12C1 5 6 1 12 1M4 12c0-5 3-8 8-8M7 12c0-3 2-5 5-5" stroke="#ddd" strokeWidth="1.200" />
        <circle cx="10.800" cy="10.800" r="1.700" fill="#fff" />
      </Ico>
      <Ico w={17} h={14} className="ml-[8px]">
        <path d="M0.500 4.500h2.500L6.500 1v12L3 9.500H0.500zM8.500 4.500c1.300 1.500 1.300 3.500 0 5" stroke="#fff" />
        <path d="M11 2.500c2.500 2.500 2.500 6.500 0 9M13.500 0.500c3.300 4 3.300 9 0 13" stroke="#ddd" />
      </Ico>
      <Fit w={23} className="ml-[9px] text-[11.5px]">ENG</Fit>
      <div className="ml-[12px] flex h-10 w-[58px] flex-col items-center text-[11.5px] leading-[19px]">
        <Fit w={27} className="mt-[1px]">19:35</Fit>
        <Fit w={58} className="-mt-px">12/06/2020</Fit>
      </div>
      <Ico w={16} h={17} className="ml-[19px]">
        <path d="M0 0h16v13h-5.500L8 16.500V13H0z" fill="#fff" />
        <path d="M3 3.500h10M3 6.500h10M3 9.500h7" stroke="#484848" />
      </Ico>
      <div className="ml-5 h-10 w-px bg-[#8a8a8a]" />
    </div>
  );
}

export default function App() {
  return (
    <div className="h-[768px] w-[1365px] overflow-hidden bg-[#2b579a] font-['Open_Sans','Noto_Sans',sans-serif] leading-4">
      <TitleBar />
      <Tabs />
      <Ribbon />
      <Workspace />
      <StatusBar />
      <Taskbar />
    </div>
  );
}
